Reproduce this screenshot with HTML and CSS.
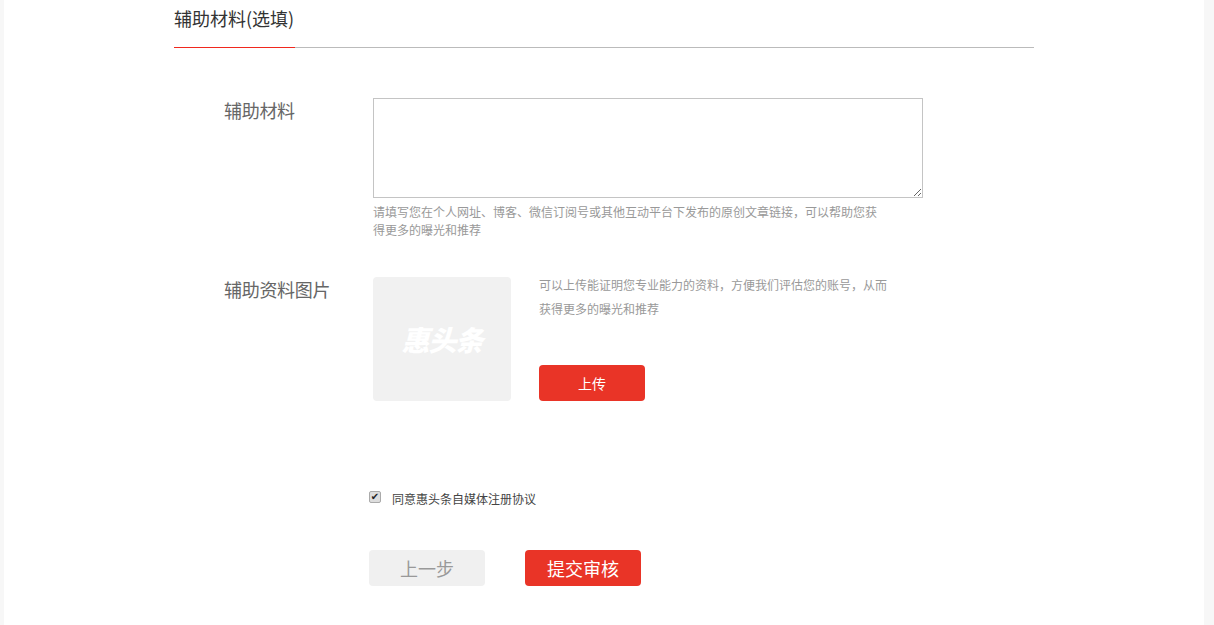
FILE: index.html
```html
<!DOCTYPE html>
<html lang="zh-CN">
<head>
  <meta charset="UTF-8">
  <title>辅助材料</title>
  <link rel="stylesheet" href="styles.css">
</head>
<body>
  <div class="page">
    <div class="section">
      <div class="section-head">
        <h2 class="section-title">辅助材料(选填)</h2>
      </div>

      <!-- 辅助材料 -->
      <div class="form-row row-material">
        <label class="form-label">辅助材料</label>
        <div class="form-field">
          <textarea class="material-input"></textarea>
          <p class="hint">请填写您在个人网址、博客、微信订阅号或其他互动平台下发布的原创文章链接，可以帮助您获得更多的曝光和推荐</p>
        </div>
      </div>

      <!-- 辅助资料图片 -->
      <div class="form-row row-picture">
        <label class="form-label">辅助资料图片</label>
        <div class="picture-box"><span class="picture-logo">惠头条</span></div>
        <div class="upload-side">
          <p class="upload-hint">可以上传能证明您专业能力的资料，方便我们评估您的账号，从而获得更多的曝光和推荐</p>
          <button class="btn btn-upload">上传</button>
        </div>
      </div>

      <div class="agree">
        <input type="checkbox" class="agree-check" checked>
        <span class="agree-text">同意惠头条自媒体注册协议</span>
      </div>

      <div class="actions">
        <button class="btn btn-prev">上一步</button>
        <button class="btn btn-submit">提交审核</button>
      </div>
    </div>
  </div>
</body>
</html>
```

FILE: styles.css
```css
html, body {
  height: 100%;
}

body {
  margin: 0;
  padding: 0;
  background-color: #f7f7f7;
  font-family: "Noto Sans CJK SC", "Liberation Sans", sans-serif;
  overflow: hidden;
}

.page {
  width: 1030px;
  height: 100%;
  margin-left: 4px;
  padding-left: 170px;
  background-color: #fff;
}

.section {
  width: 860px;
}

.section-head {
  height: 47px;
  border-bottom: 1px solid #bbb;
  position: relative;
}

.section-head::after {
  content: "";
  position: absolute;
  left: 0;
  bottom: -1px;
  width: 121px;
  height: 1px;
  background-color: #f0281e;
}

.section-title {
  margin: 0;
  font-size: 18px;
  font-weight: normal;
  line-height: 36px;
  color: #333;
}

.form-row {
  display: flex;
  padding-left: 50px;
}

.row-material {
  margin-top: 50px;
}

.row-picture {
  margin-top: 38px;
}

.form-label {
  width: 149px;
  flex-shrink: 0;
  font-size: 18px;
  line-height: 24px;
  letter-spacing: -0.3px;
  color: #666;
}

.material-input {
  display: block;
  width: 550px;
  height: 100px;
  margin: 0;
  padding: 2px;
  box-sizing: border-box;
  border: 1px solid #c4c4c4;
  background: #fff;
}

.hint {
  width: 510px;
  margin: 5px 0 0;
  font-size: 12px;
  line-height: 18px;
  color: #999;
}

.picture-box {
  display: flex;
  align-items: center;
  justify-content: center;
  width: 138px;
  height: 124px;
  border-radius: 4px;
  background-color: #f1f1f1;
}

.picture-logo {
  font-size: 28px;
  font-weight: 900;
  font-style: italic;
  letter-spacing: -1px;
  color: #fff;
}

.upload-side {
  margin-left: 28px;
}

.upload-hint {
  width: 350px;
  height: 92px;
  margin: -4px 0 0;
  font-size: 12px;
  line-height: 24px;
  color: #999;
}

.btn {
  display: block;
  height: 36px;
  padding: 0;
  border: none;
  border-radius: 4px;
  font-family: inherit;
  cursor: pointer;
}

.btn-upload {
  width: 106px;
  font-size: 14px;
  color: #fff;
  background-color: #e93427;
}

.agree {
  display: flex;
  align-items: center;
  margin-top: 87px;
  padding-left: 195px;
}

/* Grey box with a dark tick, not the default blue one */
.agree-check {
  appearance: none;
  display: flex;
  align-items: center;
  justify-content: center;
  width: 12px;
  height: 12px;
  margin: -4px 11px 0 0;
  border: 1px solid #aaa;
  border-radius: 2px;
  background-color: #ddd;
}

.agree-check:checked::after {
  content: "✔";
  font-family: "DejaVu Sans", sans-serif;
  font-size: 10px;
  line-height: 10px;
  color: #222;
}

.agree-text {
  font-size: 12px;
  line-height: 22px;
  color: #444;
}

.actions {
  display: flex;
  gap: 40px;
  margin-top: 40px;
  padding-left: 195px;
}

.btn-prev {
  width: 116px;
  font-size: 18px;
  color: #999;
  background-color: #f0f0f0;
}

.btn-submit {
  width: 116px;
  font-size: 18px;
  color: #fff;
  background-color: #e93427;
}
```
